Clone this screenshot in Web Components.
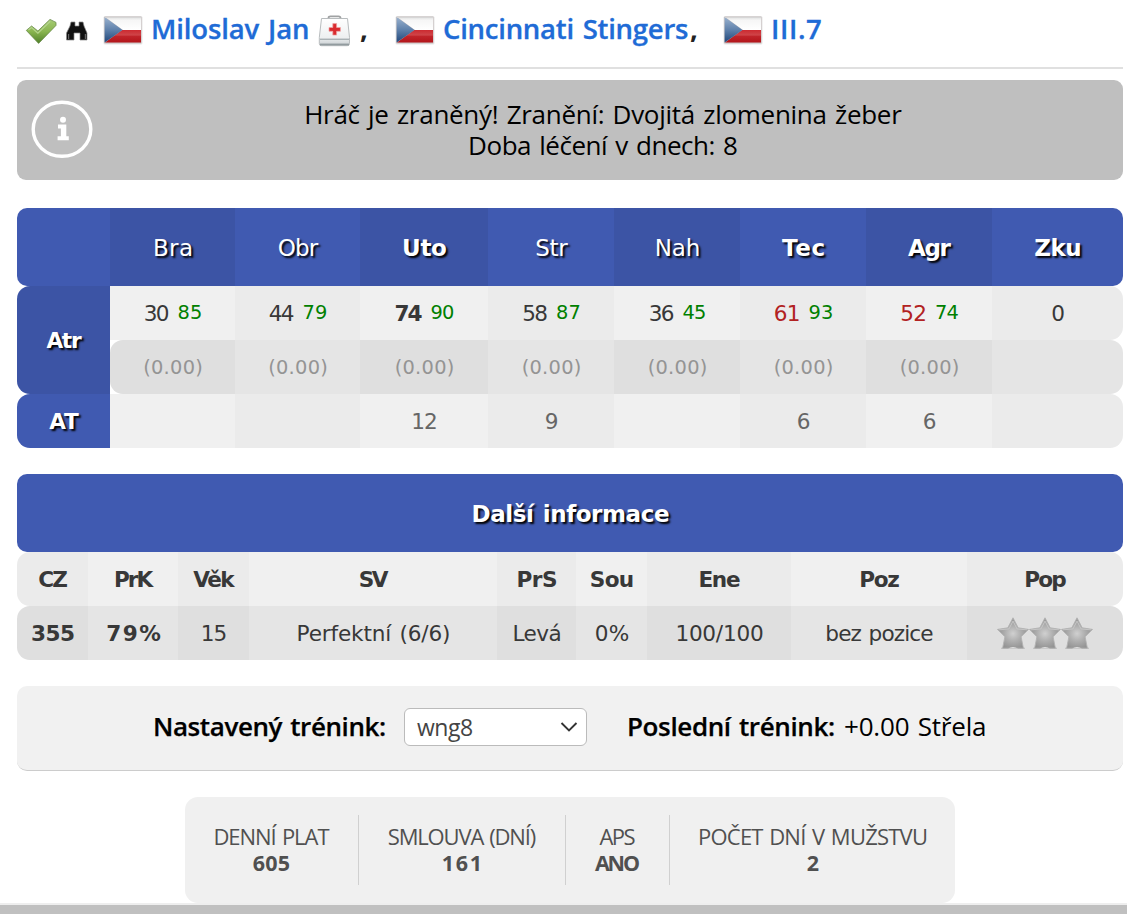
<!DOCTYPE html>
<html lang="cs">
<head>
<meta charset="utf-8">
<title>Miloslav Jan</title>
<style>
  body {
    background: #fff;
    color: #383838;
    font-family: "Open Sans", "Noto Sans", sans-serif;
    height: 914px;
    margin: 0;
    overflow: hidden;
  }
</style>
</head>
<body>
<player-page>
  <player-title slot="title"></player-title>
  <info-box>
    <fit-text w="596">Hráč je zraněný! Zranění: Dvojitá zlomenina žeber</fit-text>
    <fit-text w="267">Doba léčení v dnech: 8</fit-text>
  </info-box>
  <attribute-table></attribute-table>
  <details-table></details-table>
  <training-bar></training-bar>
  <stat-bar>
    <stat-item style="width: 173px" label="DENNÍ PLAT" lw="114" value="605" vw="37"></stat-item>
    <stat-item style="width: 206px" label="SMLOUVA (DNÍ)" lw="147" value="161" vw="36"></stat-item>
    <stat-item style="width: 103px" label="APS" lw="36" value="ANO" vw="44"></stat-item>
    <stat-item style="width: 286px" label="POČET DNÍ V MUŽSTVU" lw="227" value="2" vw="11"></stat-item>
  </stat-bar>
</player-page>

<script>
// fit-text: one line of text, tracked so that its ink is w pixels wide
const ruler = document.createElement('canvas').getContext('2d');

class FitText extends HTMLElement {
  constructor() {
    super();
    this.attachShadow({mode: 'open'}).innerHTML = `
    <style>
      :host { display: inline-block; white-space: nowrap; }
      span { display: block; word-spacing: .07em; }
    </style>
    <span><slot></slot></span>`;
  }

  connectedCallback() {
    const text = this.textContent;
    const want = parseFloat(this.getAttribute('w'));
    if (!want || text.length < 2) return;
    const cs = getComputedStyle(this);
    const span = this.shadowRoot.querySelector('span');
    ruler.font = `${cs.fontWeight} ${cs.fontSize} ${cs.fontFamily}`;
    const m = ruler.measureText(text);
    const bearings = m.width - m.actualBoundingBoxLeft - m.actualBoundingBoxRight;
    const ink = span.getBoundingClientRect().width - bearings;
    const gap = (want - ink) / (text.length - 1);
    span.style.letterSpacing = gap.toFixed(3) + 'px';
    span.style.marginRight = (-gap).toFixed(3) + 'px';
  }
}

class PlayerPage extends HTMLElement {
  constructor() {
    super();
    this.attachShadow({mode: 'open'}).innerHTML = `
    <style>
      :host { display: flex; flex-direction: column; height: 914px; }
      main { display: flex; flex-direction: column; height: 903px; padding: 0 4px 0 17px; }
      footer { background: #c0c0c0; border-top: 2px solid #eee; height: 9px; }
    </style>
    <main><slot name="title"></slot><slot></slot></main>
    <footer></footer>`;
  }
}

class FlagIcon extends HTMLElement {
  constructor() {
    super();
    this.attachShadow({mode: 'open'}).innerHTML = `
    <style>
      :host { display: block; flex: none; height: 30px; width: 40px; }
      svg { display: block; }
    </style>
    <svg width="40" height="30" viewBox="0 0 40 30">
      <defs>
        <linearGradient id="w" x2="0" y2="1"><stop offset="0" stop-color="#dedede"/><stop offset=".25" stop-color="#f6f6f6"/><stop offset="1" stop-color="#fff"/></linearGradient>
        <linearGradient id="r" x2="0" y2="1"><stop offset="0" stop-color="#cc2a30"/><stop offset=".4" stop-color="#cf4448"/><stop offset=".5" stop-color="#c0242a"/><stop offset="1" stop-color="#b3151a"/></linearGradient>
        <linearGradient id="b" x2="0" y2="1"><stop offset="0" stop-color="#9ab2cf"/><stop offset=".5" stop-color="#5f81ab"/><stop offset="1" stop-color="#1f467a"/></linearGradient>
      </defs>
      <rect x=".5" y="1" width="39" height="28.5" rx="1.5" fill="#000" opacity=".1"/>
      <rect x="1.2" y="1.6" width="37.4" height="27" rx="1" fill="#c9c2c2"/>
      <path d="M2 2h36v13H20z" fill="url(#w)"/>
      <path d="M19 15h19v12.6H2z" fill="url(#r)"/>
      <path d="M1.6 2L19.5 15 1.6 27.6z" fill="url(#b)"/>
      <path d="M2 2.3h36" stroke="#d4d4d4"/>
    </svg>`;
  }
}

class PlayerTitle extends HTMLElement {
  constructor() {
    super();
    this.attachShadow({mode: 'open'}).innerHTML = `
    <style>
      :host {
        border-bottom: 2px solid #e0e0e0;
        box-sizing: border-box;
        color: #222;
        display: flex;
        flex: none;
        font-size: 27.5px;
        font-weight: 700;
        height: 69px;
        line-height: 40px;
        padding: 8px 0 0 8px;
      }
      svg { display: block; flex: none; }
      flag-icon { margin: 7px 8px 0 0; }
      a { color: #206bd6; font-weight: 600; margin-top: 1px; -webkit-text-stroke: .3px #206bd6; }
      .check { margin: 9px 8px 0 0; }
      .find { margin: 12px 14px 0 0; }
      .name { width: 159px; }
      .kit { margin: 6px 9px 0 8px; }
      .comma { display: block; margin-top: 1px; width: 9px; }
      .team { width: 247px; }
    </style>
    <svg class="check" width="32" height="29" viewBox="0 0 32 29">
      <defs><linearGradient id="g" x2="0" y2="1"><stop offset="0" stop-color="#a5cb74"/><stop offset=".5" stop-color="#8ab550"/><stop offset="1" stop-color="#4f8028"/></linearGradient></defs>
      <path d="M1.3 13.4L6.6 9l6.3 5L25 2.4l6 3v3L13.6 26.4z" fill="url(#g)" stroke="#6b8c4c" stroke-width=".8" stroke-linejoin="round"/>
      <path d="M3.4 13L6.6 10.6l6.3 5.6L25.2 4.2" fill="none" stroke="#b4d48c" stroke-width="1.2"/>
    </svg>
    <svg class="find" width="24" height="22" viewBox="0 0 24 22">
      <path d="M6 2h4v4h4V2h4l1 4 3 7v7h-7v-7h-6v7H1.5v-7L5 6z" fill="#111" stroke="#888" stroke-width=".7" stroke-linejoin="round"/>
      <path d="M3.6 14v5M20.4 14v5" fill="none" stroke="#666" stroke-width="1.2"/>
    </svg>
    <flag-icon></flag-icon>
    <a class="name"><fit-text w="155">Miloslav Jan</fit-text></a>
    <svg class="kit" width="33" height="34" viewBox="0 0 33 34">
      <defs><linearGradient id="k" x2="0" y2="1"><stop offset="0" stop-color="#fff"/><stop offset=".7" stop-color="#eef0f1"/><stop offset="1" stop-color="#c7cdd0"/></linearGradient></defs>
      <path d="M10.5 5.5V4q0-1.6 2-1.6h8q2 0 2 1.6v1.5" fill="none" stroke="#a0a2a3" stroke-width="1.8"/>
      <path d="M3.5 4.5h26l2 19v6q0 2.2-2.2 2.2H3.5q-2.2 0-2.2-2.2v-6z" fill="url(#k)" stroke="#b8bcbe" stroke-linejoin="round"/>
      <path d="M2 25.3h29" stroke="#aab2b5" stroke-width="1.4"/>
      <path d="M2 30.5h29" stroke="#929b9f" stroke-width="1.8"/>
      <path d="M14.8 9.6h3.8v3.9h3.8v3.8h-3.8v3.8h-3.8v-3.8H11v-3.8h3.8z" fill="#d92b2f" stroke="#efa5a5" stroke-width=".7"/>
    </svg>
    <span class="comma">,</span>
    <flag-icon style="margin-left: 26px"></flag-icon>
    <a class="team"><fit-text w="244">Cincinnati Stingers</fit-text></a>
    <span class="comma">,</span>
    <flag-icon style="margin-left: 24px"></flag-icon>
    <a><fit-text w="48">III.7</fit-text></a>`;
  }
}

class InfoBox extends HTMLElement {
  constructor() {
    super();
    this.attachShadow({mode: 'open'}).innerHTML = `
    <style>
      :host {
        align-items: center;
        background: #bfbfbf;
        border-radius: 9px;
        color: #000;
        display: flex;
        flex: none;
        font-size: 26px;
        height: 100px;
        line-height: 31px;
        margin-top: 11px;
      }
      svg { display: block; margin-left: 14px; }
      .lines { align-items: center; display: flex; flex: 1; flex-direction: column; padding-right: 10px; }
    </style>
    <svg width="62" height="60" viewBox="0 0 62 60">
      <ellipse cx="31" cy="29.3" rx="28.8" ry="27" fill="none" stroke="#fff" stroke-width="3.4"/>
      <circle cx="32" cy="19.8" r="3" fill="#fff"/>
      <path d="M27 24.5h8.3v11.7h2.5v4H26.6v-4h3.3v-7.8H27z" fill="#fff"/>
    </svg>
    <div class="lines"><slot></slot></div>`;
  }
}

const tableStyle = `
  :host { display: block; flex: none; font-family: "DejaVu Sans", Verdana, sans-serif; font-size: 21.6px; }
  .grid { display: grid; }
  .cell {
    align-items: center;
    box-sizing: border-box;
    display: flex;
    gap: 8px;
    justify-content: center;
    min-width: 0;
    padding-left: 1px;
  }
  .head, .side { color: #fff; text-shadow: 2px 2px 2px #000; }
  .head { font-size: 23px; padding-top: 1px; }
  .b { font-weight: 700; }
  .last { border-radius: 0 13px 13px 0; }
  .first { border-radius: 13px 0 0 13px; }
`;

// columns: name, header ink width, value, potential, daily change, AT
const attributes = [
  ['Bra', 36, '30', '85', '(0.00)', ''],
  ['Obr', 40, '44', '79', '(0.00)', ''],
  ['Uto', 42, '74', '90', '(0.00)', '12'],
  ['Str', 32, '58', '87', '(0.00)', '9'],
  ['Nah', 42, '36', '45', '(0.00)', ''],
  ['Tec', 42.5, '61', '93', '(0.00)', '6'],
  ['Agr', 43.5, '52', '74', '(0.00)', '6'],
  ['Zku', 45, '0', '', '', '']
];
const primary = ['Uto', 'Tec', 'Agr', 'Zku'];

class AttributeTable extends HTMLElement {
  constructor() {
    super();
    const last = i => i === attributes.length - 1 ? ' last' : '';
    let html = '<div class="cell head e first10"></div>';
    attributes.forEach(([name, w], i) => {
      const bold = primary.includes(name) ? ' b' : '';
      html += `<div class="cell head ${i % 2 ? 'e' : 'o'}${bold}${last(i) && ' last10'}"><fit-text w="${w}">${name}</fit-text></div>`;
    });
    html += '<div class="cell side o b first atr"><fit-text w="35.5">Atr</fit-text></div>';
    attributes.forEach(([name, , val, pot], i) => {
      const cls = name === 'Uto' ? 'b' : (name === 'Tec' || name === 'Agr' ? 'red' : '');
      const w = name === 'Uto' ? 27 : 24;
      html += `<div class="cell l${i % 2}${last(i)}"><fit-text class="${cls}" w="${w}">${val}</fit-text>` +
        (pot ? `<fit-text class="pot" w="22.5">${pot}</fit-text>` : '') + '</div>';
    });
    attributes.forEach(([, , , , diff], i) => {
      html += `<div class="cell diff d${i % 2}${last(i)}${i ? '' : ' first'}">${diff && `<fit-text w="57">${diff}</fit-text>`}</div>`;
    });
    html += '<div class="cell side e b first"><fit-text w="30">AT</fit-text></div>';
    attributes.forEach(([, , , , , at], i) => {
      html += `<div class="cell at l${i % 2}${last(i)}">${at && `<fit-text w="23">${at}</fit-text>`}</div>`;
    });
    this.attachShadow({mode: 'open'}).innerHTML = `
    <style>${tableStyle}
      :host { margin-top: 28px; }
      .grid {
        grid-template-columns: 93px 125px 125px 128px 126px 126px 126px 126px 131px;
        grid-template-rows: 78px 54px 54px 54px;
      }
      .o { background: #3c54a5; }
      .e { background: #405ab1; }
      .first10 { border-radius: 10px 0 0 10px; }
      .last10 { border-radius: 0 10px 10px 0; }
      .atr { grid-row: span 2; }
      .l0 { background: #f0f0f0; }
      .l1 { background: #ebebeb; }
      .d0 { background: #dfdfdf; }
      .d1 { background: #e5e5e5; }
      .red { color: #b22222; }
      .pot { color: #008000; font-size: 19.4px; margin-top: -2px; }
      .diff { color: #949494; font-size: 19.4px; }
      .at { color: #666; }
    </style>
    <div class="grid">${html}</div>`;
  }
}

// columns: name, its ink width, value, its ink width
const details = [
  ['CZ', 28, '355', 42],
  ['PrK', 39.5, '79%', 53],
  ['Věk', 42, '15', 23],
  ['SV', 29, 'Perfektní (6/6)', 150.5],
  ['PrS', 38.5, 'Levá', 46],
  ['Sou', 42, '0%', 33],
  ['Ene', 40.5, '100/100', 85.5],
  ['Poz', 39, 'bez pozice', 107],
  ['Pop', 41, '', 0]
];

class StarIcon extends HTMLElement {
  constructor() {
    super();
    this.attachShadow({mode: 'open'}).innerHTML = `
    <style>
      :host { display: block; height: 32px; width: 32px; }
      svg { display: block; }
    </style>
    <svg width="32" height="32" viewBox="0 0 32 32">
      <defs><radialGradient id="s" cx=".5" cy=".52" r=".55"><stop offset="0" stop-color="#d0d0d0"/><stop offset=".45" stop-color="#b0b0b0"/><stop offset="1" stop-color="#8e8e8e"/></radialGradient></defs>
      <path d="M4 31.3h24" stroke="#c4c4c4" stroke-width="1.4"/>
      <path d="M16 .8l5.2 10 10.3 1.6-7.4 7.4 2.3 11.4H5.6l2.3-11.4L.5 12.4l10.3-1.6z" fill="url(#s)" stroke="#b2b2b2" stroke-width=".9" stroke-linejoin="round"/>
      <path d="M11 31.6q5-3.4 10 0z" fill="#dfdfdf"/>
      <path d="M2 12.9l10-1 4-7.8 4 7.8 10 1" fill="none" stroke="#c6c6c6" stroke-width="1"/>
    </svg>`;
  }
}

class DetailsTable extends HTMLElement {
  constructor() {
    super();
    const edge = i => i === 0 ? ' first' : (i === details.length - 1 ? ' last' : '');
    let html = '<div class="cell head b"><fit-text w="195.5">Další informace</fit-text></div>';
    details.forEach(([name, w], i) => {
      html += `<div class="cell b h${i % 2}${edge(i)}"><fit-text w="${w}">${name}</fit-text></div>`;
    });
    details.forEach(([, , val, w], i) => {
      html += `<div class="cell r${i % 2}${i < 2 ? ' b' : ''}${edge(i)}">` +
        (val ? `<fit-text w="${w}">${val}</fit-text>` : '<star-icon></star-icon><star-icon></star-icon><star-icon></star-icon>') + '</div>';
    });
    this.attachShadow({mode: 'open'}).innerHTML = `
    <style>${tableStyle}
      :host { margin-top: 26px; }
      .grid {
        grid-template-columns: 71px 90px 71px 248px 79px 71px 144px 176px 156px;
        grid-template-rows: 78px 54px 54px;
      }
      .head { background: #405ab1; border-radius: 10px; grid-column: 1 / -1; }
      .h0 { background: #ebebeb; }
      .h1 { background: #f0f0f0; }
      .r0 { background: #dfdfdf; }
      .r1 { background: #e5e5e5; }
      .r0.last { gap: 0; padding: 0; }
    </style>
    <div class="grid">${html}</div>`;
  }
}

class TrainingBar extends HTMLElement {
  constructor() {
    super();
    this.attachShadow({mode: 'open'}).innerHTML = `
    <style>
      :host {
        align-items: center;
        background: #f1f1f1;
        border-bottom: 1px solid #ccc;
        border-radius: 10px;
        box-sizing: border-box;
        color: #000;
        display: flex;
        flex: none;
        font-size: 26px;
        height: 85px;
        line-height: 36px;
        margin-top: 26px;
        padding: 0 0 0 136px;
      }
      fit-text { margin-bottom: 5px; }
      .bold { font-weight: 600; -webkit-text-stroke: .25px #000; }
      .set { width: 234px; }
      .done { width: 207px; }
      .select {
        align-items: center;
        background: #fff;
        border: 1px solid #bbb;
        border-radius: 6px;
        box-sizing: border-box;
        color: #444;
        display: flex;
        flex: none;
        font-size: 23px;
        height: 38px;
        justify-content: space-between;
        margin: 0 40px 2px 17px;
        padding: 0 8px 0 12px;
        width: 183px;
      }
      .select fit-text { margin: 0; }
      .value { margin-left: 10px; }
      svg { display: block; }
    </style>
    <div class="bold set"><fit-text w="230">Nastavený trénink:</fit-text></div>
    <div class="select">
      <fit-text w="55">wng8</fit-text>
      <svg width="18" height="12" viewBox="0 0 18 12"><path d="M1.5 2L9 9.5 16.5 2" fill="none" stroke="#333" stroke-width="1.9"/></svg>
    </div>
    <div class="bold done"><fit-text w="205">Poslední trénink:</fit-text></div>
    <fit-text class="value" w="140">+0.00 Střela</fit-text>`;
  }
}

class StatBar extends HTMLElement {
  constructor() {
    super();
    this.attachShadow({mode: 'open'}).innerHTML = `
    <style>
      :host {
        align-self: center;
        background: #f0f0f0;
        border-radius: 13px;
        box-sizing: border-box;
        color: #505050;
        display: flex;
        flex: none;
        font-size: 22px;
        height: 106px;
        margin-top: 26px;
        padding: 18px 0;
        width: 770px;
      }
      ::slotted(*:not(:last-child)) { border-right: 1px solid #d0d0d0; }
    </style>
    <slot></slot>`;
  }
}

class StatItem extends HTMLElement {
  constructor() {
    super();
    const get = name => this.getAttribute(name);
    this.attachShadow({mode: 'open'}).innerHTML = `
    <style>
      :host {
        align-items: center;
        box-sizing: content-box;
        display: flex;
        flex: none;
        flex-direction: column;
        height: 70px;
        line-height: 26px;
      }
      .label { margin-top: 8px; }
      .value { font-size: 21.5px; font-weight: 700; margin-top: 1px; }
    </style>
    <fit-text class="label" w="${get('lw')}">${get('label')}</fit-text>
    <fit-text class="value" w="${get('vw')}">${get('value')}</fit-text>`;
  }
}

customElements.define('flag-icon', FlagIcon);
customElements.define('star-icon', StarIcon);
customElements.define('player-page', PlayerPage);
customElements.define('player-title', PlayerTitle);
customElements.define('info-box', InfoBox);
customElements.define('attribute-table', AttributeTable);
customElements.define('details-table', DetailsTable);
customElements.define('training-bar', TrainingBar);
customElements.define('stat-bar', StatBar);
customElements.define('stat-item', StatItem);
// measures itself when upgraded, so its surroundings have to be styled by now
customElements.define('fit-text', FitText);
</script>
</body>
</html>
